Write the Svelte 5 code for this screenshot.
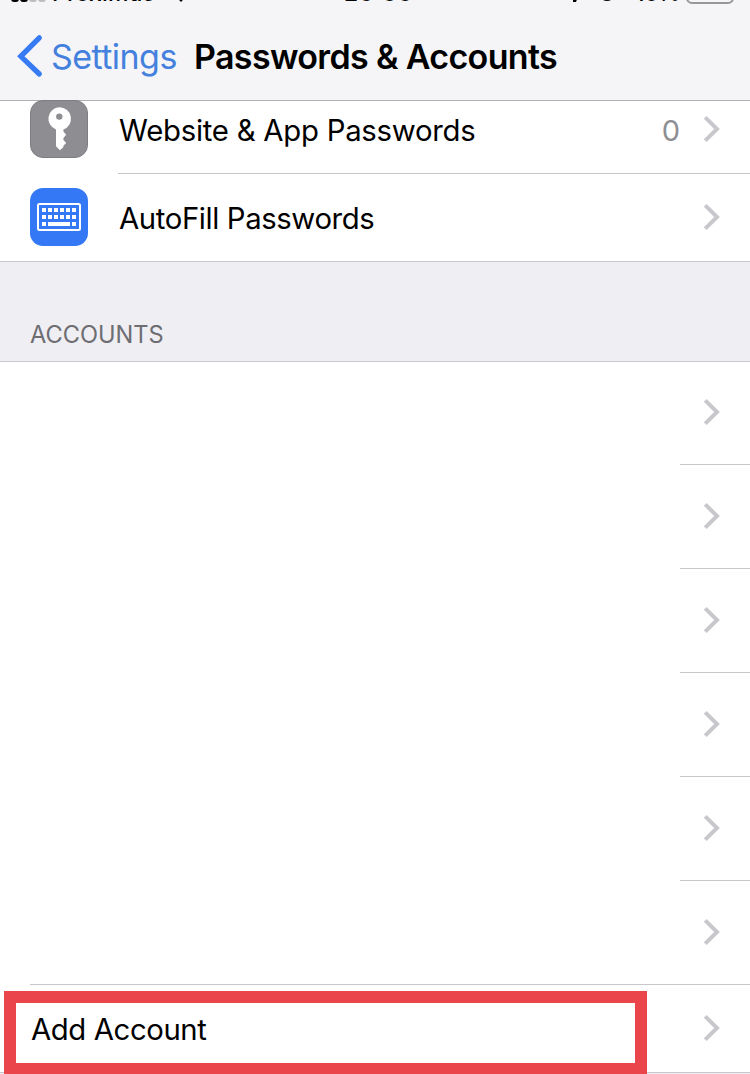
<script>
  const accounts = [1, 2, 3, 4, 5, 6];
</script>

{#snippet chevron()}
  <svg class="chevron" width="18" height="28" viewBox="0 0 18 28" aria-hidden="true">
    <path d="M2.2 2.4 14 14 2.2 25.6" fill="none" stroke="#c7c7cc" stroke-width="4" />
  </svg>
{/snippet}

<div class="screen">
  <header>
    <div class="status">
      <div class="signal"><i></i><i></i><i class="off"></i><i class="off"></i></div>
      <span class="carrier">Proximus</span>
      <svg class="wifi" width="24" height="18" viewBox="0 0 24 18"><path d="M0 5Q12-5 24 5L12 18Z" /></svg>
      <span class="time">23<b>:</b>33</span>
      <svg class="arrow" width="18" height="18" viewBox="0 0 18 18"><path d="M18 0 11 18 8 18 8 9 0 8Z" /></svg>
      <svg class="lock" width="18" height="18" viewBox="0 0 18 18"><circle cx="9" cy="9" r="7.7" fill="none" stroke="#000" stroke-width="2.4" /></svg>
      <span class="charge">16%</span>
      <span class="battery"></span>
    </div>
    <div class="nav">
      <svg class="back" width="26" height="44" viewBox="0 0 26 44" aria-hidden="true">
        <path d="M22.3 3.8 3.8 22.3 22.3 40" fill="none" stroke="#367bf3" stroke-width="5.2" stroke-linecap="round" />
      </svg>
      <span class="settings">Settings</span>
      <h1>Passwords &amp; Accounts</h1>
    </div>
  </header>

  <div class="row first">
    <svg class="icon" width="58" height="58" viewBox="0 0 58 58">
      <rect x=".5" y=".5" width="57" height="57" rx="12.5" fill="#8e8d92" stroke="#7e7d82" />
      <path fill="#fff" fill-rule="evenodd" d="M29.3 7.2a11.5 11.5 0 0 1 4.1 22.3v2.1l2.8 3.1-2.8 3.2v2.2l2.8 3-2.8 2.6v1.4L30 50.2l-4-3.9V29.5a11.5 11.5 0 0 1 3.3-22.3Zm0 6.2a3.2 3.2 0 1 0 0 6.4 3.2 3.2 0 0 0 0-6.4Z" />
    </svg>
    <div class="cell">
      <span class="label website">Website &amp; App Passwords</span>
      <span class="count">0</span>
      {@render chevron()}
    </div>
  </div>
  <div class="row last">
    <svg class="icon" width="58" height="58" viewBox="0 0 58 58">
      <rect width="58" height="58" rx="13" fill="#3478f6" />
      <rect x="8" y="16" width="42" height="26" rx="1.5" fill="none" stroke="#fff" stroke-width="2" />
      <g fill="#fff">
        {#each [12, 18, 24, 30, 36, 42] as x}
          <rect {x} y="20" width="4" height="4" />
          <rect {x} y="27" width="4" height="4" />
        {/each}
        <rect x="12" y="34" width="4" height="4" />
        <rect x="18" y="34" width="22" height="4" />
        <rect x="42" y="34" width="4" height="4" />
      </g>
    </svg>
    <div class="cell">
      <span class="label autofill">AutoFill Passwords</span>
      {@render chevron()}
    </div>
  </div>

  <div class="section"><span>ACCOUNTS</span></div>

  {#each accounts as account, i (account)}
    <div class="account" class:top={i === 0} class:wide={i === accounts.length - 1}>
      {@render chevron()}
    </div>
  {/each}

  <div class="add">
    <span class="label addlabel">Add Account</span>
    {@render chevron()}
    <div class="highlight"></div>
  </div>
</div>

<style>
  :global(body) { background: #efeff4; }
  .screen {
    width: 750px;
    height: 1074px;
    overflow: hidden;
    background: #efeef3;
    font-family: Inter, "Liberation Sans", sans-serif;
    color: #000;
    display: flex;
    flex-direction: column;
  }
  .screen * { box-sizing: border-box; }
  header {
    height: 101px;
    flex: none;
    background: #f5f5f8;
    border-bottom: 1px solid #b0b0b4;
  }
  .status {
    position: relative;
    height: 13px;
    font-size: 23px;
    font-weight: 500;
    line-height: 28px;
  }
  .status > * { position: absolute; }
  .signal { left: 11px; top: -9px; display: flex; gap: 1px; }
  .signal i { width: 8px; height: 11px; border-radius: 3px; background: #000; }
  .signal i.off { background: #bdbdc0; }
  .carrier { left: 52px; top: -21px; letter-spacing: 0.15px; }
  .wifi { left: 169px; top: -16px; }
  .time { left: 344px; top: -21px; letter-spacing: 1px; }
  .time b { position: relative; top: -3px; font-weight: 500; }
  .arrow { left: 565px; top: -16px; }
  .lock { left: 598px; top: -17px; }
  .charge { left: 635px; top: -21px; letter-spacing: -0.6px; }
  .battery {
    left: 686px;
    top: -18px;
    width: 48px;
    height: 22px;
    border: 2px solid #98989b;
    border-radius: 6px;
  }
  .nav { display: flex; align-items: center; height: 87px; padding-left: 17px; white-space: nowrap; }
  .back { flex: none; margin-top: -1px; }
  .settings { width: 151px; padding-left: 8px; font-size: 34px; color: #4480dd; letter-spacing: -0.55px; }
  h1 { margin: 0; font-size: 34px; font-weight: 600; letter-spacing: -0.65px; }
  .row { display: flex; align-items: center; height: 88px; flex: none; padding-left: 30px; background: #fff; }
  .row.first { margin-top: -15px; background: linear-gradient(transparent 15px, #fff 15px); }
  .row.last { border-bottom: 1px solid #c8c7cc; }
  .icon { flex: none; margin-top: -1px; }
  .first .icon { margin-top: -2px; }
  .row .cell {
    display: flex;
    align-items: center;
    flex: 1;
    height: 88px;
    margin-left: 30px;
    padding: 0 31px 1px 0;
    border-bottom: 1px solid #c8c7cc;
  }
  .row.last .cell { border-bottom-color: transparent; }
  .label { font-size: 29.3px; line-height: 40px; padding: 4px 0 0 1px; margin-right: auto; white-space: nowrap; }
  .website { letter-spacing: -0.24px; }
  .autofill { letter-spacing: -0.38px; }
  .addlabel { letter-spacing: -0.4px; }
  .count { margin-right: 23px; padding-top: 2px; font-size: 29px; color: #8e8e93; }
  .chevron { flex: none; margin-right: -2px; }
  .section {
    display: flex;
    align-items: flex-end;
    flex: none;
    height: 100px;
    padding: 0 30px 11px;
    border-bottom: 1px solid #c8c7cc;
    background: #efeef3;
    color: #6d6d72;
    font-size: 23.6px;
    line-height: 30px;
  }
  .account {
    display: flex;
    flex: none;
    justify-content: flex-end;
    align-items: center;
    height: 104px;
    padding: 0 31px 2px 0;
    background: linear-gradient(#c8c7cc, #c8c7cc) right bottom / 70px 1px no-repeat #fff;
  }
  .account.top { height: 103px; padding-bottom: 3px; }
  .account.wide { background-size: 720px 1px; }
  .add {
    position: relative;
    display: flex;
    flex: none;
    align-items: center;
    height: 88px;
    padding: 0 31px 1px 30px;
    border-bottom: 1px solid #c8c7cc;
    background: #fff;
  }
  .highlight { position: absolute; left: 4px; top: 6px; width: 643px; height: 84px; border: 12px solid #e9454b; }
</style>
